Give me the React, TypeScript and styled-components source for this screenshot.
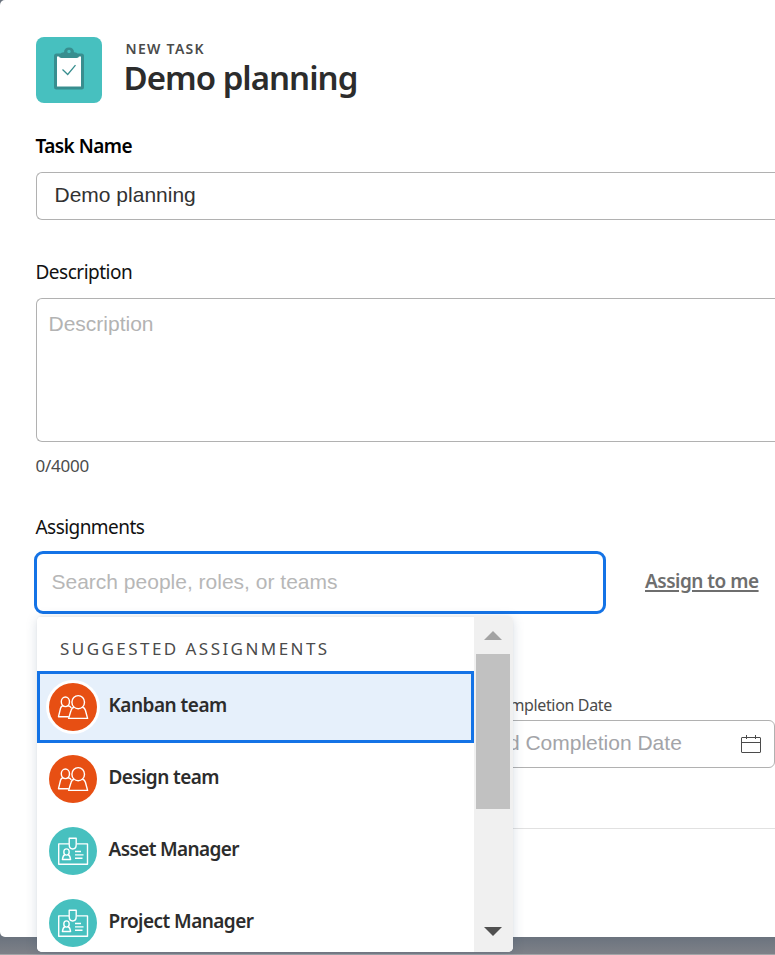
import React from "react";
import styled, { createGlobalStyle, css } from "styled-components";

const GlobalStyle = createGlobalStyle`
  *, *::before, *::after { box-sizing: border-box; }
  body { margin: 0; background: #797e86; overflow: hidden; }
  input, textarea { font: inherit; outline: none; }
`;

type TypeProps = { $size: number; $track?: number; $weight?: number; $color?: string };
const clean = css<TypeProps>`
  font-family: "Noto Sans", "Open Sans", sans-serif;
  font-size: ${(p) => p.$size}px;
  font-weight: ${(p) => p.$weight ?? 400};
  letter-spacing: ${(p) => p.$track ?? 0}px;
  color: ${(p) => p.$color ?? "#111"};
  white-space: nowrap;
`;

const Screen = styled.div`
  width: 775px;
  height: 955px;
  overflow: hidden;
  background: linear-gradient(#6b737e 937px, #7e8188 954px, #a3a5a8 954px);
`;
const Dialog = styled.main`
  display: flex;
  flex-direction: column;
  height: 937px;
  padding: 37px 0 0 36px;
  background: #fff;
  border-radius: 5px 0 0 5px;
`;
const Header = styled.header`
  display: flex;
  gap: 22px;
  height: 66px;
  margin-bottom: 31px;
`;
const TaskTile = styled.div`
  width: 66px;
  height: 66px;
  border-radius: 8px;
  background: #47c0bf;
`;
const Heading = styled.div`
  display: flex;
  flex-direction: column;
`;
const Eyebrow = styled.span<TypeProps>`
  ${clean}
  margin: 4px 0 0 1.5px;
  line-height: 16px;
`;
const Title = styled.h1<TypeProps>`
  ${clean}
  margin: 2px 0 0 -0.5px;
  line-height: 38px;
`;
const Label = styled.label<TypeProps & { $gap: number; $shift?: number }>`
  ${clean}
  line-height: 24px;
  height: 24px;
  margin-bottom: ${(p) => p.$gap}px;
  margin-left: ${(p) => p.$shift ?? -0.5}px;
`;
const Field = styled.section<{ $after: number }>`
  display: flex;
  flex-direction: column;
  margin-bottom: ${(p) => p.$after}px;
`;
const outline = css`
  border: 1px solid #b1b1b1;
  font-family: "Liberation Sans", Arial, sans-serif;
  font-size: 21px;
  background: #fff;
`;
const TextInput = styled.input`
  && {
    ${outline}
    border-right: 0;
  }
  height: 48px;
  border-radius: 6px 0 0 6px;
  padding: 0 0 2px 17.5px;
  color: #323232;
`;
const TextArea = styled.textarea`
  && {
    ${outline}
    line-height: 24px;
    border-right: 0;
  }
  display: block;
  height: 144px;
  resize: none;
  border-radius: 6px 0 0 6px;
  padding: 13px 11.5px;
  &::placeholder { color: #b3b3b3; }
`;
const Counter = styled.span<TypeProps>`
  ${clean}
  margin: 12px 0 0 -0.5px;
  line-height: 24px;
`;
const AssignRow = styled.div`
  position: relative;
  display: flex;
  align-items: center;
  margin-left: -2px;
  height: 63px;
`;
const SearchInput = styled.input`
  && {
    font-family: "Liberation Sans", Arial, sans-serif;
    font-size: 21px;
  }
  width: 572px;
  height: 63px;
  border: 3px solid #1473e6;
  border-radius: 9px;
  padding: 0 14.5px 1px;
  &::placeholder { color: #b7b7b7; }
`;
const AssignLink = styled.a<TypeProps>`
  ${clean}
  margin: -3px 0 0 39px;
  line-height: 26px;
  text-decoration: underline;
  text-decoration-thickness: 2px;
  text-underline-offset: 2px;
`;
const DateField = styled.section`
  display: flex;
  flex-direction: column;
  margin-left: 396px;
`;
const DateBox = styled.div`
  ${outline}
  display: flex;
  align-items: center;
  justify-content: space-between;
  height: 48px;
  border-radius: 6px;
  padding: 0 12px 0 9.5px;
  color: #a3a4a8;
`;
const DateText = styled.span`
  margin-top: -2px;
`;
const Divider = styled.hr`
  align-self: stretch;
  margin: 60px 0 0 4px;
  border: 0;
  border-top: 1px solid #e1e1e1;
`;
const Menu = styled.div`
  position: absolute;
  z-index: 2;
  top: 65px;
  left: 3px;
  display: grid;
  grid-template-columns: 437px 39px;
  width: 476px;
  height: 336px;
  overflow: hidden;
  background: #fff;
  border-radius: 5px;
`;
const MenuShadow = styled.div`
  position: absolute;
  z-index: 1;
  top: 65px;
  left: 3px;
  width: 476px;
  height: 336px;
  border-radius: 5px;
  box-shadow: 0 2px 12px rgba(40, 70, 110, 0.18), 0 0 1px rgba(0, 0, 0, 0.12);
`;
const Options = styled.div`
  display: flex;
  flex-direction: column;
  border-top: 1px solid #eee;
`;
const GroupName = styled.div<TypeProps>`
  ${clean}
  height: 54px;
  padding-left: 23px;
  line-height: 64px;
`;
const Option = styled.div<TypeProps & { $active?: boolean }>`
  ${clean}
  display: flex;
  flex: none;
  align-items: center;
  gap: 11.5px;
  height: 72px;
  padding-left: ${(p) => (p.$active ? 9 : 12)}px;
  border: ${(p) => (p.$active ? "3px solid #1473e6" : "0")};
  background: ${(p) => (p.$active ? "#e6f0fb" : "#fff")};
`;
const OptionName = styled.span`
  margin-top: -5px;
`;
const Avatar = styled.span<{ $color: string; $ring?: boolean }>`
  display: flex;
  flex: none;
  width: 48px;
  height: 48px;
  border-radius: 50%;
  background: ${(p) => p.$color};
  box-shadow: ${(p) => (p.$ring ? "0 0 0 3px #fff" : "none")};
`;
const Scrollbar = styled.div`
  display: flex;
  flex-direction: column;
  align-items: center;
  padding: 15px 1px 0 0;
  background: #f0f0f0;
`;
const ScrollArrow = styled.svg`
  display: block;
  width: 18px;
  height: 9px;
  flex: none;
`;
const Thumb = styled.div`
  width: 34px;
  height: 155px;
  margin: 14px 0 118px;
  background: #c1c1c1;
`;

const ClipboardIcon = () => (
  <svg width="66" height="66" viewBox="0 0 66 66" fill="none">
    <rect x="18" y="16.5" width="30" height="36" rx="2.5" fill="#388e8f" />
    <rect x="21" y="19.5" width="24" height="30" fill="#fff" />
    <path d="M23 17H43V18.5Q43 21 40.5 21H25.5Q23 21 23 18.5Z" fill="#388e8f" />
    <path fillRule="evenodd" d="M24.5 17.5C24.5 16 26 15.2 28 15.2C28 12.3 30 10.5 33 10.5S38 12.3 38 15.2C40 15.2 41.5 16 41.5 17.5ZM33 12.8A1.7 1.7 0 1 0 33 16.2A1.7 1.7 0 1 0 33 12.8Z" fill="#388e8f" />
    <path d="M26.5 32.5L31.7 37.5L39.5 28.2" stroke="#388e8f" strokeWidth="1.3" />
  </svg>
);
const TeamIcon = () => (
  <svg width="48" height="48" viewBox="0 0 48 48" fill="none" stroke="#fff" strokeWidth="1.4" strokeLinejoin="round">
    <ellipse cx="29.2" cy="19.2" rx="6.3" ry="6.6" />
    <path d="M25.2 24.2C23.2 24.5 22.6 25.4 22.1 27.2L19.6 35.4H38.6L36.4 27.2C35.9 25.4 35.3 24.5 33.3 24.2" />
    <ellipse cx="16.4" cy="18.8" rx="4.1" ry="4.8" />
    <path d="M13.8 22.8C12.4 23.1 11.9 24 11.5 25.3L9.5 33.7H19.8M19.1 22.8C20.5 23 21.5 23.6 22.3 24.8" />
  </svg>
);
const BadgeIcon = () => (
  <svg width="48" height="48" viewBox="0 0 48 48" fill="none" stroke="#fff" strokeWidth="1.4" strokeLinejoin="round">
    <path d="M20 16.9H9.7V37.2H38.5V16.9H28" />
    <path d="M20.2 11.2H27.2V17.5C27.2 20.3 26.1 22 23.7 22S20.2 20.3 20.2 17.5Z" />
    <ellipse cx="17.5" cy="25" rx="2.7" ry="3.1" />
    <path d="M16 27.5C14.3 28.2 13.8 29.8 13.4 32.5H21.6C21.2 29.8 20.7 28.2 19 27.5" />
    <path d="M26 24.5H32M26 27.9H34.5M26 31.3H33.5" />
  </svg>
);
const CalendarIcon = () => (
  <svg width="22" height="20" viewBox="0 0 22 20" fill="none" stroke="#4b4b4b" strokeWidth="1">
    <rect x="1.5" y="3.5" width="19" height="15" rx="0.5" />
    <path d="M1.5 8.5H20.5M6.5 1V5M15.5 1V5" />
  </svg>
);

const suggestions = [
  { name: "Kanban team", kind: "team", track: -0.5 },
  { name: "Design team", kind: "team", track: -0.6 },
  { name: "Asset Manager", kind: "role", track: -0.62 },
  { name: "Project Manager", kind: "role", track: -0.55 },
];

export default function App() {
  return (
    <>
      <GlobalStyle />
      <Screen>
        <Dialog>
          <Header>
            <TaskTile><ClipboardIcon /></TaskTile>
            <Heading>
              <Eyebrow $size={14} $weight={600} $track={1.3} $color="#4b4b4b">NEW TASK</Eyebrow>
              <Title $size={33} $weight={600} $track={-0.98} $color="#2c2c2c">Demo planning</Title>
            </Heading>
          </Header>
          <Field $after={40}>
            <Label $size={19} $weight={600} $track={-0.55} $gap={14} $color="#000">Task Name</Label>
            <TextInput defaultValue="Demo planning" />
          </Field>
          <Field $after={37}>
            <Label $size={19} $track={-0.5} $gap={14}>Description</Label>
            <TextArea placeholder="Description" />
            <Counter $size={17} $track={-0.25} $color="#4b4b4b">0/4000</Counter>
          </Field>
          <Field $after={79}>
            <Label $size={19} $track={-0.55} $gap={12}>Assignments</Label>
            <AssignRow>
              <SearchInput placeholder="Search people, roles, or teams" />
              <AssignLink $size={19} $weight={600} $track={-0.5} $color="#6e6e6e">Assign to me</AssignLink>
              <MenuShadow />
              <Menu>
                <Options>
                  <GroupName $size={17} $track={2.45} $color="#4b4b4b">SUGGESTED ASSIGNMENTS</GroupName>
                  {suggestions.map((s, i) => (
                    <Option key={s.name} $active={i === 0} $size={19} $weight={600} $track={s.track} $color="#2c2c2c">
                      <Avatar $color={s.kind === "team" ? "#e74f13" : "#47c0bf"} $ring={i === 0}>
                        {s.kind === "team" ? <TeamIcon /> : <BadgeIcon />}
                      </Avatar>
                      <OptionName>{s.name}</OptionName>
                    </Option>
                  ))}
                </Options>
                <Scrollbar>
                  <ScrollArrow viewBox="0 0 18 9"><path d="M0 9L9 0L18 9Z" fill="#a3a3a3" /></ScrollArrow>
                  <Thumb />
                  <ScrollArrow viewBox="0 0 18 9"><path d="M0 0H18L9 9Z" fill="#505050" /></ScrollArrow>
                </Scrollbar>
              </Menu>
            </AssignRow>
          </Field>
          <DateField>
            <Label $size={16} $track={-0.35} $gap={3} $shift={-4.5} $color="#4b4b4b">Planned Completion Date</Label>
            <DateBox>
              <DateText>Planned Completion Date</DateText>
              <CalendarIcon />
            </DateBox>
          </DateField>
          <Divider />
        </Dialog>
      </Screen>
    </>
  );
}
